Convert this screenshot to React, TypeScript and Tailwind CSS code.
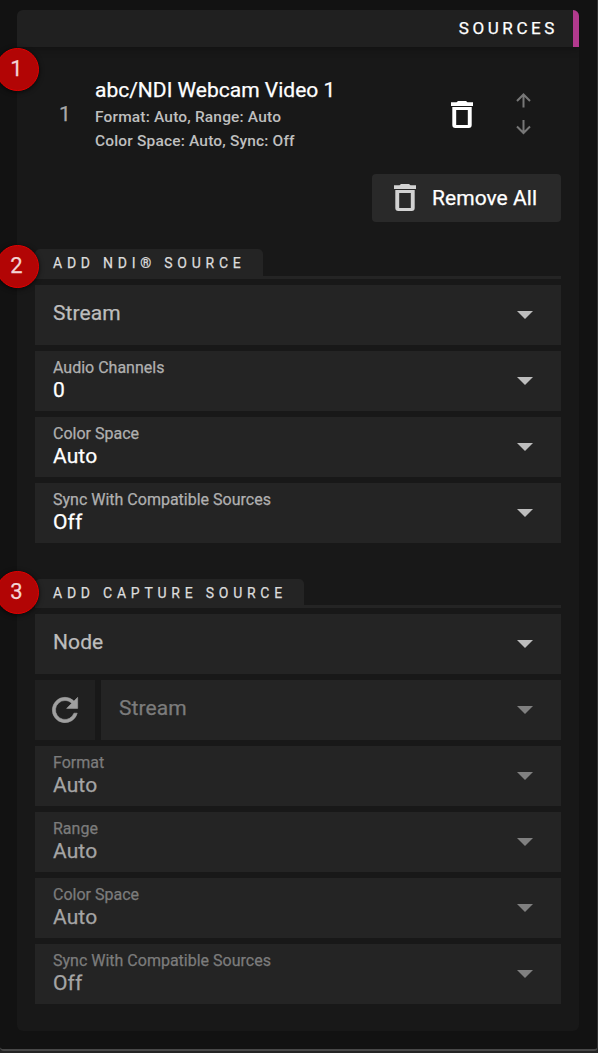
type FieldProps = {
  label: string;
  value?: string;
  disabled?: boolean;
};

function Field({ label, value, disabled = false }: FieldProps) {
  return (
    <div className="flex h-[60px] grow items-center justify-between bg-[#242424] pl-[18px] pr-7">
      {value === undefined ? (
        <span className={`pb-1 text-[21px] leading-6 tracking-[0.1px] ${disabled ? "text-[#7c7c7c]" : "text-[#bdbdbd]"}`}>{label}</span>
      ) : (
        <div className="flex flex-col pb-1">
          <span className={`text-[16px] leading-[21px] ${disabled ? "text-[#7c7c7c]" : "text-[#b0b0b0]"}`}>{label}</span>
          <span className={`text-[21px] leading-6 tracking-[0.1px] ${disabled ? "text-[#a5a5a5]" : "text-white"}`}>{value}</span>
        </div>
      )}
      <svg width="16" height="8" viewBox="0 0 16 8" className={disabled ? "fill-[#808080]" : "fill-[#bdbdbd]"}>
        <path d="M0 0h16L8 8z" />
      </svg>
    </div>
  );
}

function Trash({ className }: { className: string }) {
  return (
    <svg width="22" height="27" viewBox="0 0 22 27" className={className}>
      <path d="M0 1.2h5.5L7 0h8l1.5 1.2H22V5H0z" />
      <path fillRule="evenodd" d="M1.3 6h19.4v18a3 3 0 0 1-3 3H4.3a3 3 0 0 1-3-3zM5.2 9v15h11.6V9z" />
    </svg>
  );
}

function Heading({ title, tab }: { title: string; tab: string }) {
  return (
    <div className="flex items-end">
      <h2 className={`rounded-t-[5px] bg-[#242424] pl-[18px] text-[14px] leading-[29px] tracking-[4.76px] text-[#dcdcdc] ${tab}`}>
        {title}
      </h2>
      <div className="h-[3px] grow bg-[#242424]" />
    </div>
  );
}

function Badge({ n, place }: { n: number; place: string }) {
  return (
    <div
      className={`absolute left-[-4.5px] flex size-[43px] items-center justify-center rounded-full border-[1.5px] border-[#e30000] bg-[#b20505] pb-px pr-px text-[22px] leading-none text-[#f3d5d5] shadow-[0_1px_5px_rgba(0,0,0,0.7)] ${place}`}
    >
      {n}
    </div>
  );
}

export default function App() {
  return (
    <div className="relative h-[1053px] w-[598px] overflow-hidden bg-[#242424] font-[Roboto,sans-serif] [-webkit-text-stroke:0.25px_currentColor]">
      <div className="h-[1051px] rounded-b-[4px] border-b-2 border-r border-b-[#484848] border-r-[#333333] bg-[#121212] pl-[17px] pr-[18px] pt-[10px]">
        <main className="h-[1021px] overflow-hidden rounded-md bg-[#181818]">
          <header className="flex h-[37px] items-center justify-end border-r-[6px] border-[#b23a8e] bg-[#202020] pb-0.5 pr-[15px] shadow-[0_2px_8px_rgba(0,0,0,0.3)]">
            <h1 className="text-[17px] leading-5 tracking-[3.6px] text-white">SOURCES</h1>
          </header>
          <div className="px-[18px]">
            <div className="flex h-[127px] items-start pt-[30px]">
              <span className="w-[60px] pl-[24px] pt-[25px] text-[21px] leading-6 text-[#a8a8a8]">1</span>
              <div className="w-[356px]">
                <div className="text-[21px] leading-[27px] text-white">abc/NDI Webcam Video 1</div>
                <div className="pt-px text-[15.5px] font-medium leading-6 tracking-[0.17px] text-[#bfbfbf] [-webkit-text-stroke:0px]">
                  Format: Auto, Range: Auto
                  <br />
                  Color Space: Auto, Sync: Off
                </div>
              </div>
              <Trash className="mt-6 fill-white" />
              <div className="ml-[43px] mt-4 flex flex-col gap-3">
                <svg width="15" height="15" viewBox="0 0 15 15" className="fill-none stroke-[#777777] stroke-2">
                  <path d="M7.5 14.5v-13M1 8l6.5-6.5L14 8" />
                </svg>
                <svg width="15" height="15" viewBox="0 0 15 15" className="fill-none stroke-[#777777] stroke-2">
                  <path d="M7.5 0v13M1 6.5l6.5 6.5L14 6.5" />
                </svg>
              </div>
            </div>
            <button className="ml-auto flex h-12 w-[189px] items-center rounded-[4px] bg-[#292929] pl-[22px] text-[21px] leading-6 tracking-[0.05px] text-white">
              <Trash className="mb-px mr-4 fill-[#d2d2d2]" />
              Remove All
            </button>
            <section className="mt-[27px] grid gap-1.5">
              <Heading title="ADD NDI® SOURCE" tab="h-[30px] w-[228px]" />
              <Field label="Stream" />
              <Field label="Audio Channels" value="0" />
              <Field label="Color Space" value="Auto" />
              <Field label="Sync With Compatible Sources" value="Off" />
            </section>
            <section className="mt-9 grid gap-1.5">
              <Heading title="ADD CAPTURE SOURCE" tab="h-[29px] w-[269px]" />
              <Field label="Node" />
              <div className="flex gap-1.5">
                <button className="flex size-[60px] items-center justify-center bg-[#202020] pb-px">
                  <svg width="38" height="38" viewBox="0 0 24 24" className="fill-[#a0a0a0] stroke-[#a0a0a0] [stroke-width:0.35]">
                    <path d="M17.65 6.35A7.96 7.96 0 0 0 12 4a8 8 0 1 0 7.73 10h-2.08A6 6 0 1 1 12 6c1.66 0 3.14.69 4.22 1.78L13 11h7V4z" />
                  </svg>
                </button>
                <Field label="Stream" disabled />
              </div>
              <Field label="Format" value="Auto" disabled />
              <Field label="Range" value="Auto" disabled />
              <Field label="Color Space" value="Auto" disabled />
              <Field label="Sync With Compatible Sources" value="Off" disabled />
            </section>
          </div>
        </main>
      </div>
      <Badge n={1} place="top-[47.5px]" />
      <Badge n={2} place="top-[244.5px]" />
      <Badge n={3} place="top-[570.5px]" />
    </div>
  );
}
